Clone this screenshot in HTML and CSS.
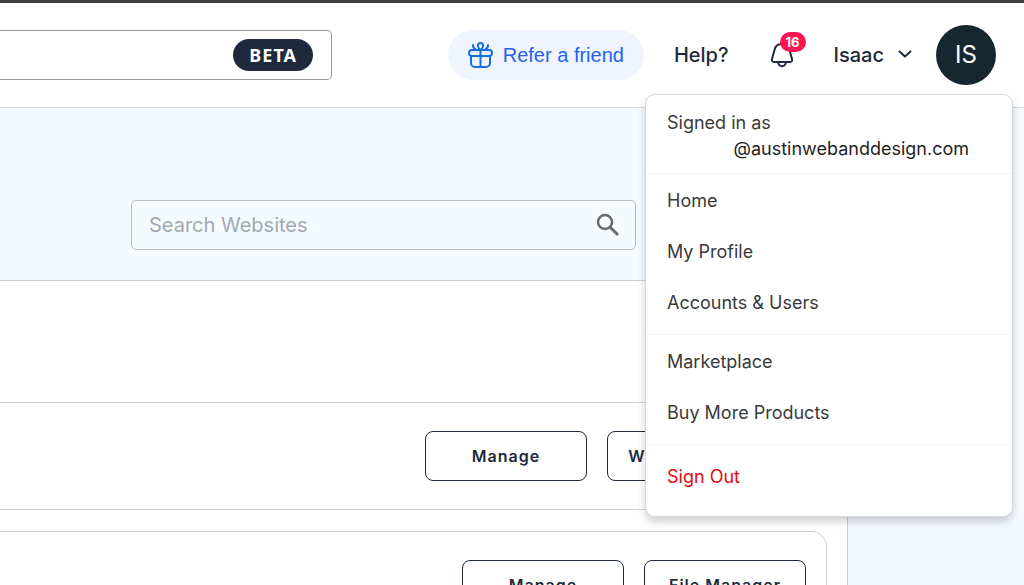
FILE: index.html
```html
<!DOCTYPE html>
<html lang="en">
<head>
  <meta charset="UTF-8">
  <meta name="viewport" content="width=device-width, initial-scale=1.0">
  <title>Websites</title>
  <link rel="stylesheet" href="styles.css">
</head>
<body>
  <header class="topbar">
    <div class="finder">
      <span class="beta">BETA</span>
    </div>
    <nav class="topnav">
      <a href="#" class="refer">
        <svg width="25" height="28" viewBox="0 0 25 28" fill="none" stroke="currentColor" stroke-width="2" stroke-linecap="round" stroke-linejoin="round">
          <rect x="1" y="9" width="23" height="6" rx="3"/>
          <path d="M3 15v7a4 4 0 0 0 4 4h11a4 4 0 0 0 4-4v-7M12.500 9v17"/>
          <path d="M12.500 9c-3-2-4-7 0-7s3 5 0 7z"/>
          <path d="M5 4c0 2 1 4 3 5M20 4c0 2-1 4-3 5"/>
        </svg>
        Refer a friend
      </a>
      <a href="#" class="help">Help?</a>
      <button class="bell" aria-label="Notifications">
        <svg width="24" height="28" viewBox="0 0 24 28" fill="none" stroke="currentColor" stroke-width="2" stroke-linejoin="round">
          <path d="M12 3C7 3 5 6 4.500 9L2 18c-.5 2 .5 3 2 3h16c1.500 0 2.500-1 2-3l-2.500-9C19 6 17 3 12 3z"/>
          <path d="M8 21c0 5.500 8 5.500 8 0"/>
        </svg>
        <span class="count">16</span>
      </button>
      <button class="user">
        Isaac
        <svg width="14" height="10" viewBox="0 0 14 10" fill="none" stroke="currentColor" stroke-width="2" stroke-linecap="round" stroke-linejoin="round">
          <path d="M1.500 1.500l5.500 5 5.500-5"/>
        </svg>
      </button>
      <span class="avatar">IS</span>
    </nav>

    <!-- Account menu -->
    <div class="menu">
      <div class="menu-group signed">
        <span>Signed in as</span>
        <span class="email">@austinwebanddesign.com</span>
      </div>
      <div class="menu-group">
        <a href="#">Home</a>
        <a href="#">My Profile</a>
        <a href="#">Accounts &amp; Users</a>
      </div>
      <div class="menu-group">
        <a href="#">Marketplace</a>
        <a href="#">Buy More Products</a>
      </div>
      <div class="menu-group last">
        <a href="#" class="sign-out">Sign Out</a>
      </div>
    </div>
  </header>

  <main class="content">
    <div class="search-row">
      <div class="search">
        <input type="text" placeholder="Search Websites" aria-label="Search Websites">
        <svg width="24" height="24" viewBox="0 0 24 24" fill="none" stroke="currentColor">
          <circle cx="9" cy="9" r="7" stroke-width="2.500"/>
          <path d="M14 14l8 8" stroke-width="3"/>
        </svg>
      </div>
    </div>
    <div class="panel-head"></div>
    <div class="site-row">
      <button class="btn">Manage</button>
      <button class="btn">Website Stats</button>
    </div>
    <div class="card">
      <button class="btn">Manage</button>
      <button class="btn">File Manager</button>
    </div>
  </main>
</body>
</html>
```
FILE: styles.css
```css
* {
  box-sizing: border-box;
}
body {
  margin: 0;
  font-family: Inter, sans-serif;
  font-size: 18px;
  color: #1e293b;
  background-color: #f5fafe;
  height: 100vh;
  overflow: hidden;
}
a {
  color: inherit;
  text-decoration: none;
}
button {
  font-family: inherit;
  color: inherit;
  cursor: pointer;
}

/* Top bar */
.topbar {
  position: relative;
  display: flex;
  align-items: center;
  justify-content: space-between;
  height: 108px;
  padding-right: 28px;
  background-color: #fff;
  border-top: 3px solid #3f3f3f;
  border-bottom: 1px solid #d5d8e0;
}
.finder {
  display: flex;
  align-items: center;
  justify-content: flex-end;
  width: 332px;
  height: 50px;
  padding-right: 18px;
  border: 1px solid #999;
  border-left: 0;
  border-radius: 0 5px 5px 0;
}
.beta {
  padding: 0 16px;
  line-height: 32px;
  border-radius: 16px;
  background-color: #1e293b;
  color: #fff;
  font-family: "Noto Sans", sans-serif;
  font-weight: 700;
  letter-spacing: 1px;
}
.topnav {
  display: flex;
  align-items: center;
}
.refer {
  display: flex;
  align-items: center;
  gap: 10px;
  height: 50px;
  padding: 0 20px;
  border-radius: 25px;
  background-color: #eff4ff;
  color: #2563eb;
  font-family: "Liberation Sans", Arial, sans-serif;
  font-size: 20px;
}
.refer svg {
  color: #1570e0;
}
.help {
  margin-left: 30px;
  font-size: 20px;
  font-weight: 500;
}
.bell {
  position: relative;
  display: flex;
  margin-left: 41px;
  padding: 0;
  border: 0;
  background: none;
}
.count {
  position: absolute;
  top: -9px;
  left: 10px;
  padding: 0 6px;
  border-radius: 10px;
  background-color: #ff1450;
  color: #fff;
  font-size: 13px;
  font-weight: 700;
  line-height: 20px;
}
.user {
  display: flex;
  align-items: center;
  gap: 14px;
  margin-left: 40px;
  padding: 0;
  border: 0;
  background: none;
  font-size: 20px;
  font-weight: 500;
}
.avatar {
  width: 60px;
  margin-left: 24px;
  border-radius: 50%;
  background-color: #172730;
  color: #fff;
  font-size: 24px;
  line-height: 60px;
  text-align: center;
}

/* Account menu */
.menu {
  position: absolute;
  top: 91px;
  right: 11px;
  z-index: 2;
  width: 368px;
  background-color: #fff;
  border: 1px solid #d5d9e2;
  border-radius: 10px;
  box-shadow: 0 5px 8px rgba(0, 0, 0, 0.18);
  color: #3a3a3a;
}
.menu-group {
  display: flex;
  flex-direction: column;
  padding: 1px 21px 6px;
  border-bottom: 1px solid #f6f6f8;
}
.menu-group a {
  line-height: 51px;
}
.signed {
  padding-top: 15px;
  padding-bottom: 11px;
  line-height: 26px;
}
.email {
  padding-right: 22px;
  color: #1f1f1f;
  text-align: right;
}
.menu-group.last {
  padding-top: 6px;
  padding-bottom: 14px;
  border-bottom: 0;
}
.menu-group .sign-out {
  color: #e60a0a;
}

/* Page content */
.content {
  margin-right: 176px;
  border-right: 1px solid #cbd0d6;
  background-color: #fff;
}
.search-row {
  height: 173px;
  padding: 92px 211px 0 131px;
  border-bottom: 1px solid #cbd0d8;
  background-color: #f5fafe;
}
.search {
  display: flex;
  align-items: center;
  height: 50px;
  padding: 0 15px 0 17px;
  border: 1px solid #bbb;
  border-radius: 5px;
  color: #6b6b6b;
}
.search input {
  flex: 1;
  min-width: 0;
  padding: 0;
  border: 0;
  outline: none;
  background: none;
  font-family: inherit;
  font-size: 20px;
}
.search input::placeholder {
  color: #a3a8b3;
}
.panel-head {
  height: 122px;
  border-bottom: 1px solid #cbd0d8;
}
.site-row,
.card {
  display: flex;
  justify-content: flex-end;
  gap: 20px;
}
.site-row {
  padding: 28px 78px 28px 0;
  border-bottom: 1px solid #cbd0d8;
}
.card {
  margin: 21px 20px 0 0;
  padding: 28px 20px 28px 0;
  border: 1px solid #cfd2d8;
  border-left: 0;
  border-radius: 0 16px 0 0;
}
.btn {
  width: 162px;
  height: 50px;
  padding: 0;
  border: 1px solid #1e293b;
  border-radius: 8px;
  background-color: #fff;
  font-size: 16px;
  font-weight: 600;
  letter-spacing: 1px;
}
```
